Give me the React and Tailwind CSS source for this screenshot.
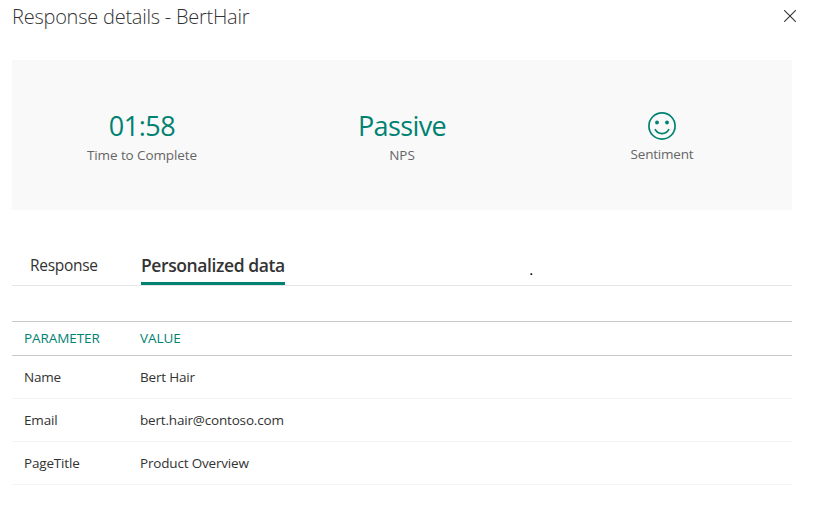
const stats = [
  { label: 'Time to Complete', value: '01:58', valueClass: 'tracking-[-0.45px]' },
  { label: 'NPS', value: 'Passive', valueClass: 'tracking-[-0.6px]' },
];

const rows = [
  ['Name', 'Bert Hair'],
  ['Email', 'bert.hair@contoso.com'],
  ['PageTitle', 'Product Overview'],
];

function Smile() {
  return (
    <svg width="28" height="28" viewBox="0 0 28 28" fill="none" stroke="#008272" strokeWidth="1.7">
      <circle cx="14" cy="14" r="13.1" />
      <circle cx="9" cy="10.5" r="1.9" fill="#008272" stroke="none" />
      <circle cx="19" cy="10.5" r="1.9" fill="#008272" stroke="none" />
      <path d="M7 17.2C8.5 20 11 21.6 14 21.6s5.5-1.6 7-4.4" />
    </svg>
  );
}

export default function App() {
  return (
    <div className="h-[505px] w-[815px] overflow-hidden bg-white pl-3 font-['Open_Sans','Noto_Sans',sans-serif] text-[#333333]">
      <header className="flex h-[60px] items-start justify-between pr-[19px]">
        <h1 className="pt-[3px] text-[20px] leading-7 font-light tracking-[-0.24px]">
          <span>Response details - BertHair</span>
        </h1>
        <button type="button" aria-label="Close" className="mt-[10px]">
          <svg width="12" height="12" viewBox="0 0 12 12" stroke="#333333" strokeWidth="1.1">
            <path d="M0.2 0.2l11.6 11.6M11.8 0.2l-11.6 11.6" />
          </svg>
        </button>
      </header>

      <section className="grid h-[150px] w-[780px] grid-cols-3 bg-[#f9f9f9] text-center">
        {stats.map((s) => (
          <div key={s.label} className="flex flex-col items-center pt-[48px]">
            <div className="h-9 text-[27px] leading-9 text-[#008272]">
              <span className={s.valueClass}>{s.value}</span>
            </div>
            <div className="mt-[1px] text-[13.5px] leading-5 tracking-[-0.1px] text-[#666666]">{s.label}</div>
          </div>
        ))}
        <div className="flex flex-col items-center pt-[52px]">
          <Smile />
          <div className="mt-1 text-[13.5px] leading-5 tracking-[-0.2px] text-[#666666]">Sentiment</div>
        </div>
      </section>

      <nav className="mt-[40px] flex h-[36px] w-[780px] border-b border-[#e6e6e6]">
        <button type="button" className="ml-[18px] h-[35px] w-[111px] pb-[4px] text-left text-[15.5px] leading-[31px] tracking-[-0.3px]">
          Response
        </button>
        <button type="button" className="h-[35px] w-[144px] border-b-[3px] border-[#008272] pb-[1px] text-left text-[17.5px] leading-[31px] font-semibold tracking-[-0.4px] whitespace-nowrap">
          Personalized data
        </button>
        <span className="ml-[244px] pt-[5px] font-['Liberation_Sans',sans-serif] text-[16px] leading-[30px] text-black">.</span>
      </nav>

      <table className="mt-[35px] w-[780px] table-fixed border-separate border-spacing-0 text-left text-[13.5px]">
        <thead>
          <tr className="h-[35px] text-[#008272]">
            <th className="w-[116px] border-y border-[#c8c8c8] pl-3 font-normal tracking-[-0.08px]">PARAMETER</th>
            <th className="border-y border-[#c8c8c8] pl-3 font-normal tracking-[-0.08px]">VALUE</th>
          </tr>
        </thead>
        <tbody>
          {rows.map(([name, value]) => (
            <tr key={name} className="h-[43px]">
              <td className="border-b border-[#f4f4f4] pl-3 tracking-[-0.18px]">{name}</td>
              <td className="border-b border-[#f4f4f4] pl-3 tracking-[-0.18px]">{value}</td>
            </tr>
          ))}
        </tbody>
      </table>
    </div>
  );
}
